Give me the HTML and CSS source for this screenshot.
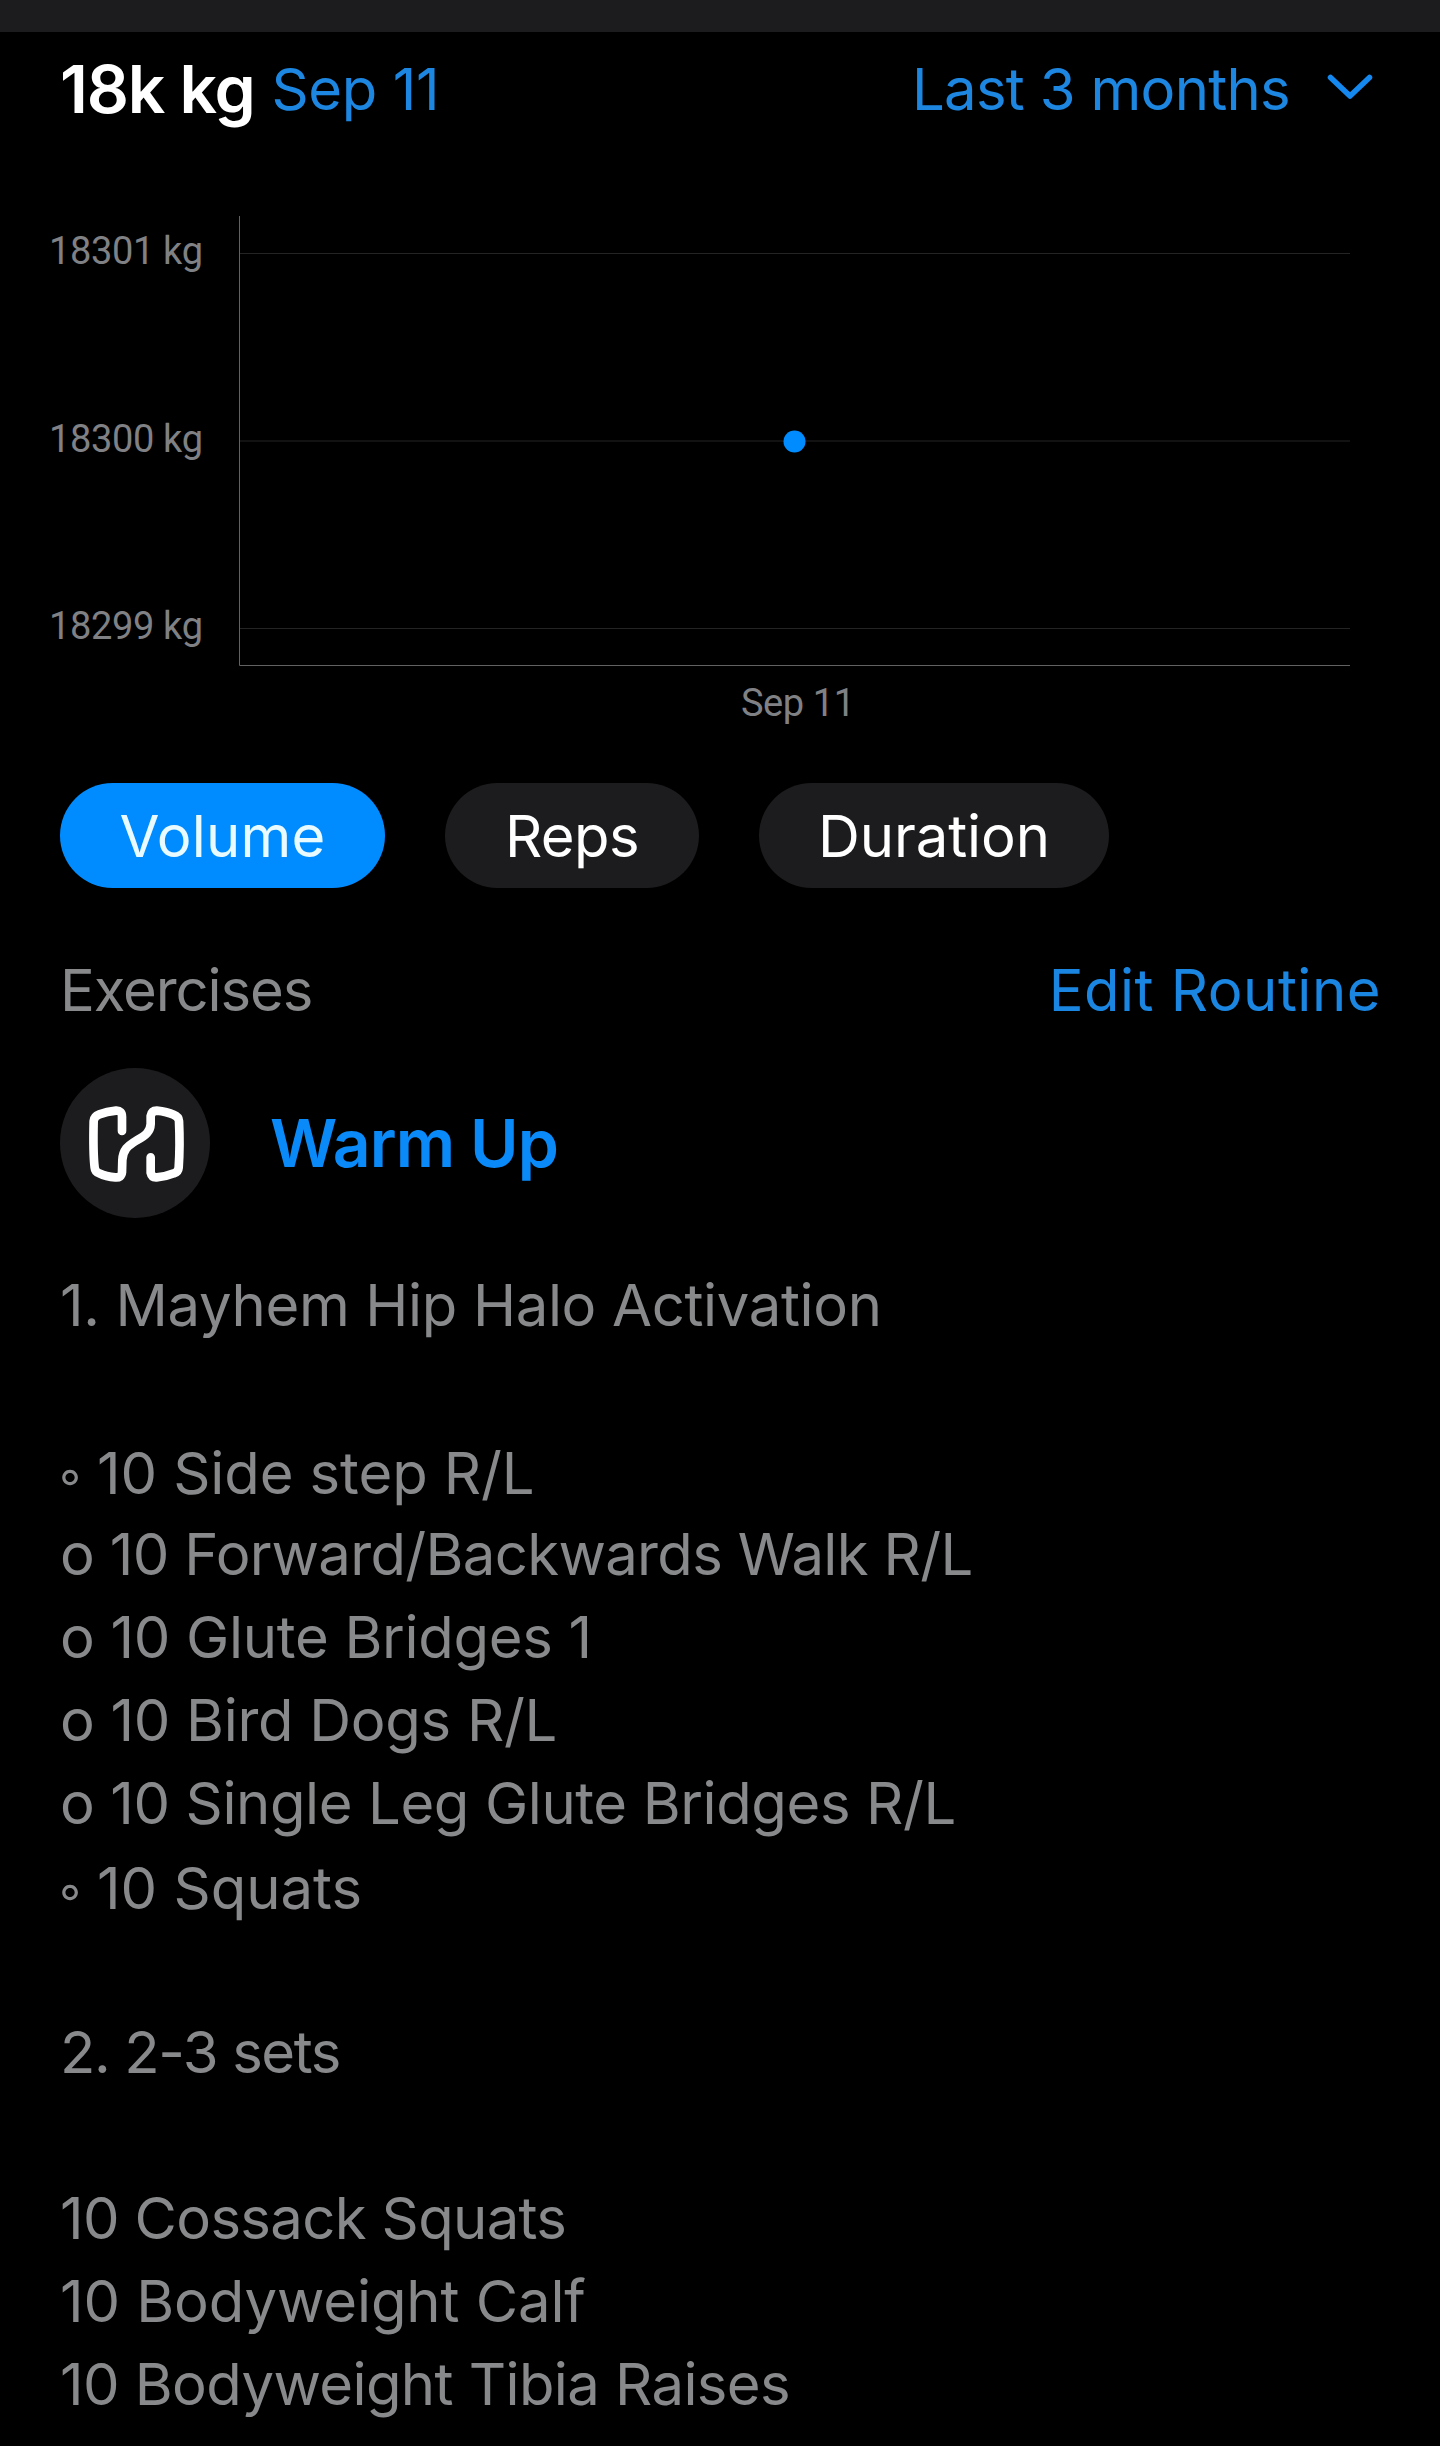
FILE: index.html
```html
<!DOCTYPE html>
<html lang="en">
<head>
    <meta charset="UTF-8">
    <meta name="viewport" content="width=device-width, initial-scale=1.0">
    <title>Routine</title>
    <link rel="stylesheet" href="styles.css">
</head>
<body>
    <div class="top-strip"></div>

    <header>
        <div class="summary">
            <span class="total">18k kg</span>
            <span class="date">Sep 11</span>
        </div>
        <div class="period">
            <span>Last 3 months</span>
            <svg class="chevron" width="48" height="28" viewBox="0 0 48 28">
                <path d="M4.500 4.500 L24 23 L43.500 4.500"/>
            </svg>
        </div>
    </header>

    <svg class="chart" width="1440" height="637" viewBox="0 146 1440 637">
        <g class="grid">
            <path d="M240 253.500H1350"/>
            <path d="M240 441H1350"/>
            <path d="M240 628.500H1350"/>
        </g>
        <path class="axis" d="M239.500 216V665.500H1350"/>
        <circle cx="794.500" cy="441.500" r="11"/>
        <text x="49" y="264" textLength="154">18301 kg</text>
        <text x="49" y="452" textLength="154">18300 kg</text>
        <text x="49" y="639" textLength="154">18299 kg</text>
        <text x="741" y="716" textLength="114">Sep 11</text>
    </svg>

    <nav>
        <button class="pill volume active">Volume</button>
        <button class="pill reps">Reps</button>
        <button class="pill duration">Duration</button>
    </nav>

    <div class="section-title">
        <span class="label">Exercises</span>
        <a class="edit">Edit Routine</a>
    </div>

    <div class="exercise">
        <div class="avatar">
            <svg width="150" height="150" viewBox="60 54 450 450">
                <path d="M246 243V200Q246 181 228 182C210 184 192 188 178 193Q162 199 161 213C160 255 160 320 164 353Q165 366 178 370C192 377 212 381 226 382Q244 384 246 367L247 330C249 300 262 288 290 271C318 257 331 244 332 222V198Q335 182 350 182C370 184 390 189 400 194Q416 200 417 213C419 255 419 310 416 353Q415 366 402 370C385 377 365 381 350 382Q335 383 332 368V322"/>
            </svg>
        </div>
        <span class="name">Warm Up</span>
    </div>

    <div class="notes">
        <p class="n1">1. Mayhem Hip Halo Activation</p>
        <p></p>
        <p class="n2 low"><span class="bullet">◦</span>10 Side step R/L</p>
        <p class="n3">o 10 Forward/Backwards Walk R/L</p>
        <p class="n4">o 10 Glute Bridges 1</p>
        <p class="n5">o 10 Bird Dogs R/L</p>
        <p class="n6">o 10 Single Leg Glute Bridges R/L</p>
        <p class="n7 low"><span class="bullet">◦</span>10 Squats</p>
        <p></p>
        <p class="n8">2. 2-3 sets</p>
        <p></p>
        <p class="n9">10 Cossack Squats</p>
        <p class="n10">10 Bodyweight Calf</p>
        <p class="n11">10 Bodyweight Tibia Raises</p>
    </div>
</body>
</html>
```
FILE: styles.css
```css
* {
    box-sizing: border-box;
}
body {
    margin: 0;
    height: 2446px;
    overflow: hidden;
    background-color: #000;
    color: #87898b;
    font-family: Inter, "Liberation Sans", sans-serif;
    font-size: 58px;
    line-height: 83px;
    white-space: nowrap;
}
svg {
    display: block;
}
.top-strip {
    height: 32px;
    background-color: #1c1c1e;
}


header {
    display: flex;
    justify-content: space-between;
    align-items: center;
    height: 114px;
    padding: 0 66px 0 60px;
    color: #1d86e0;
}
.summary {
    display: flex;
    align-items: center;
    gap: 17px;
}
.total {
    color: white;
    font-size: 66px;
    font-weight: 600;
    letter-spacing: -1.2px;
}
.date {
    letter-spacing: -0.4px;
}
.period {
    display: flex;
    align-items: center;
    gap: 36px;
    letter-spacing: -0.7px;
}
.chevron {
    margin-top: -4px;
}
.chevron path {
    fill: none;
    stroke: #1488ee;
    stroke-width: 5.5;
    stroke-linecap: round;
    stroke-linejoin: round;
}


.chart text {
    font-family: Roboto, sans-serif;
    font-size: 38px;
    fill: #808184;
}
.chart .grid {
    stroke: #242424;
}
.chart .axis {
    fill: none;
    stroke: #626262;
}
.chart circle {
    fill: #008cff;
}


nav {
    display: flex;
    gap: 60px;
    padding-left: 60px;
}
.pill {
    height: 105px;
    padding: 2px 0 0;
    border: none;
    border-radius: 53px;
    background-color: #1c1c1e;
    color: white;
    font: inherit;
}
.pill.active {
    background-color: #008cff;
    color: #e9fbff;
}
.volume {
    width: 325px;
    letter-spacing: 0.2px;
}
.reps {
    width: 254px;
    letter-spacing: -0.6px;
}
.duration {
    width: 350px;
    letter-spacing: -0.1px;
}


.section-title {
    display: flex;
    justify-content: space-between;
    margin-top: 61px;
    padding: 0 59px 0 60px;
}
.label {
    letter-spacing: -1.1px;
}
.edit {
    color: #1b86e2;
    letter-spacing: 0.5px;
}
.exercise {
    display: flex;
    align-items: center;
    gap: 60px;
    margin-top: 36px;
    padding-left: 60px;
}
.avatar {
    width: 150px;
    height: 150px;
    border-radius: 50%;
    background-color: #1c1c1e;
}
.avatar path {
    fill: none;
    stroke: white;
    stroke-width: 26;
    stroke-linecap: round;
    stroke-linejoin: round;
}
.name {
    color: #0a8af8;
    font-size: 66px;
    font-weight: 600;
    letter-spacing: -0.9px;
}


.notes {
    margin-top: 46px;
    padding-left: 60px;
}
.notes p {
    height: 83px;
    margin: 0;
}
.notes .low {
    padding-top: 2px;
}
.bullet {
    display: inline-block;
    width: 41px;
    margin-left: -4px;
    font-size: 50px;
    line-height: 1;
    vertical-align: 2px;
}
.n1 { letter-spacing: -0.35px; }
.n2 { letter-spacing: -0.1px; }
.n3 { letter-spacing: -0.65px; }
.n4 { letter-spacing: -0.3px; }
.n5 { letter-spacing: -0.3px; }
.n6 { letter-spacing: -0.4px; }
.n7 { letter-spacing: 0; }
.n8 { letter-spacing: -1.4px; }
.n9 { letter-spacing: -0.65px; }
.n10 { letter-spacing: -0.1px; }
.n11 { letter-spacing: -0.6px; }
```
